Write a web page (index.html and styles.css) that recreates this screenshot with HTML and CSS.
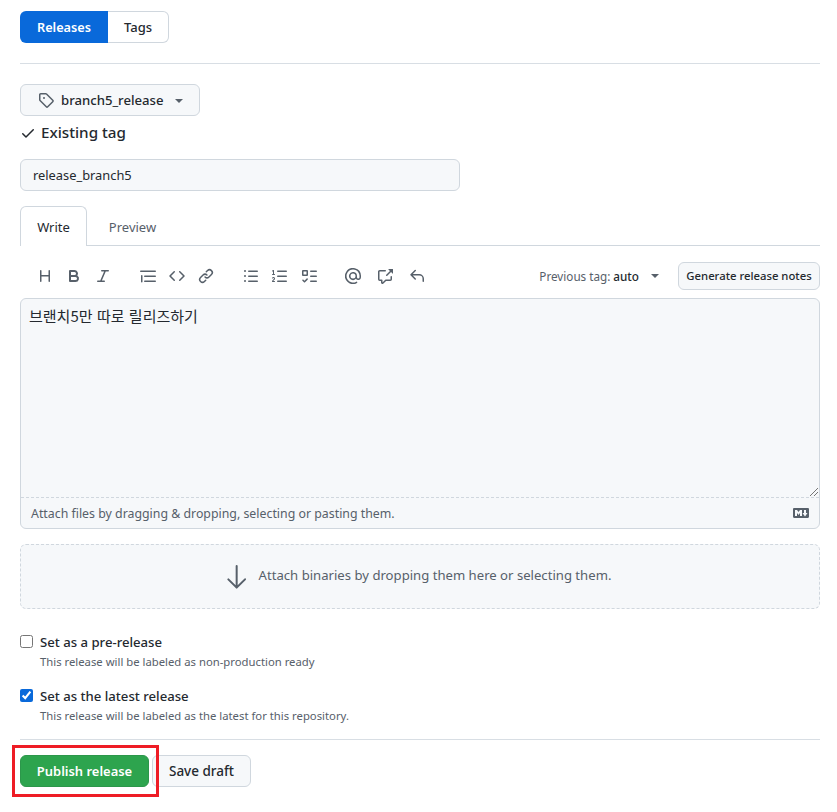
FILE: index.html
```html
<!DOCTYPE html>
<html lang="en">
<head>
<meta charset="utf-8">
<title>Release</title>
<link rel="stylesheet" href="styles.css">
</head>
<body>
<main class="page">
  <nav class="segmented">
    <a class="seg seg-active">Releases</a>
    <a class="seg seg-plain">Tags</a>
  </nav>
  <hr class="rule rule-top">
  <button class="btn btn-tag">
    <svg class="ico ico-muted" viewBox="0 0 16 16" width="16" height="16"><path d="M1 7.775V2.75C1 1.784 1.784 1 2.75 1h5.025c.464 0 .91.184 1.238.513l6.25 6.25a1.75 1.75 0 0 1 0 2.474l-5.026 5.026a1.75 1.75 0 0 1-2.474 0l-6.25-6.25A1.75 1.75 0 0 1 1 7.775Zm1.5 0c0 .066.026.13.073.177l6.25 6.25a.25.25 0 0 0 .354 0l5.025-5.025a.25.25 0 0 0 0-.354l-6.25-6.25a.25.25 0 0 0-.177-.073H2.75a.25.25 0 0 0-.25.25ZM6 5a1 1 0 1 1 0 2 1 1 0 0 1 0-2Z"/></svg>
    <span class="tag-name">branch5_release</span>
    <span class="caret"></span>
  </button>
  <div class="existing">
    <svg class="ico ico-dark" viewBox="0 0 16 16" width="16" height="16"><path d="M13.78 4.22a.75.75 0 0 1 0 1.06l-7.25 7.25a.75.75 0 0 1-1.06 0L2.22 9.28a.751.751 0 0 1 .018-1.042.751.751 0 0 1 1.042-.018L6 10.94l6.72-6.72a.75.75 0 0 1 1.06 0Z"/></svg>
    <span class="existing-text">Existing tag</span>
  </div>
  <div class="title-input">release_branch5</div>
  <div class="tabs">
    <span class="tab tab-active">Write</span>
    <span class="tab tab-plain">Preview</span>
  </div>
  <div class="toolbar">
    <div class="tool-group group-text">
      <svg class="ico ico-muted" viewBox="0 0 16 16" width="16" height="16"><path d="M3.75 2a.75.75 0 0 1 .75.75V7h7V2.75a.75.75 0 0 1 1.5 0v10.5a.75.75 0 0 1-1.5 0V8.5h-7v4.75a.75.75 0 0 1-1.5 0V2.75A.75.75 0 0 1 3.75 2Z"/></svg>
      <svg class="ico ico-muted" viewBox="0 0 16 16" width="16" height="16"><path d="M4 2h4.5a3.501 3.501 0 0 1 2.852 5.53A3.499 3.499 0 0 1 9.5 14H4a1 1 0 0 1-1-1V3a1 1 0 0 1 1-1Zm1 7v3h4.5a1.5 1.5 0 0 0 0-3Zm3.5-2a1.5 1.5 0 0 0 0-3H5v3Z"/></svg>
      <svg class="ico ico-muted" viewBox="0 0 16 16" width="16" height="16"><path d="M6 2.75A.75.75 0 0 1 6.75 2h6.5a.75.75 0 0 1 0 1.5h-2.505l-3.858 9H9.25a.75.75 0 0 1 0 1.5h-6.5a.75.75 0 0 1 0-1.5h2.505l3.858-9H6.75A.75.75 0 0 1 6 2.75Z"/></svg>
    </div>
    <div class="tool-group group-code">
      <svg class="ico ico-muted" viewBox="0 0 16 16" width="16" height="16"><path d="M.75 2.5h14.5a.75.75 0 0 1 0 1.5H.75a.75.75 0 0 1 0-1.5Zm4 5h10.5a.75.75 0 0 1 0 1.5H4.75a.75.75 0 0 1 0-1.5Zm0 5h10.5a.75.75 0 0 1 0 1.5H4.75a.75.75 0 0 1 0-1.5ZM2.5 7.75v6a.75.75 0 0 1-1.5 0v-6a.75.75 0 0 1 1.5 0Z"/></svg>
      <svg class="ico ico-muted" viewBox="0 0 16 16" width="16" height="16"><path d="m11.28 3.22 4.25 4.25a.75.75 0 0 1 0 1.06l-4.25 4.25a.749.749 0 0 1-1.275-.326.749.749 0 0 1 .215-.734L13.94 8l-3.72-3.72a.749.749 0 0 1 .326-1.275.749.749 0 0 1 .734.215Zm-6.56 0a.751.751 0 0 1 1.042.018.751.751 0 0 1 .018 1.042L2.06 8l3.72 3.72a.749.749 0 0 1-.326 1.275.749.749 0 0 1-.734-.215L.47 8.53a.75.75 0 0 1 0-1.06Z"/></svg>
      <svg class="ico ico-muted" viewBox="0 0 16 16" width="16" height="16"><path d="m7.775 3.275 1.25-1.25a3.5 3.5 0 1 1 4.95 4.95l-2.5 2.5a3.5 3.5 0 0 1-4.95 0 .751.751 0 0 1 .018-1.042.751.751 0 0 1 1.042-.018 1.998 1.998 0 0 0 2.83 0l2.5-2.5a2.002 2.002 0 0 0-2.83-2.83l-1.25 1.25a.751.751 0 0 1-1.042-.018.751.751 0 0 1-.018-1.042Zm-4.69 9.64a1.998 1.998 0 0 0 2.83 0l1.25-1.25a.751.751 0 0 1 1.042.018.751.751 0 0 1 .018 1.042l-1.25 1.25a3.5 3.5 0 1 1-4.95-4.95l2.5-2.5a3.5 3.5 0 0 1 4.95 0 .751.751 0 0 1-.018 1.042.751.751 0 0 1-1.042.018 1.998 1.998 0 0 0-2.83 0l-2.5 2.5a1.998 1.998 0 0 0 0 2.83Z"/></svg>
    </div>
    <div class="tool-group group-list">
      <svg class="ico ico-muted" viewBox="0 0 16 16" width="16" height="16"><path d="M5.75 2.5h8.5a.75.75 0 0 1 0 1.5h-8.5a.75.75 0 0 1 0-1.5Zm0 5h8.5a.75.75 0 0 1 0 1.5h-8.5a.75.75 0 0 1 0-1.5Zm0 5h8.5a.75.75 0 0 1 0 1.5h-8.5a.75.75 0 0 1 0-1.5ZM2 14a1 1 0 1 1 0-2 1 1 0 0 1 0 2Zm1-6a1 1 0 1 1-2 0 1 1 0 0 1 2 0ZM2 4a1 1 0 1 1 0-2 1 1 0 0 1 0 2Z"/></svg>
      <svg class="ico ico-muted" viewBox="0 0 16 16" width="16" height="16"><path d="M5 3.25a.75.75 0 0 1 .75-.75h8.5a.75.75 0 0 1 0 1.5h-8.5A.75.75 0 0 1 5 3.25Zm0 5a.75.75 0 0 1 .75-.75h8.5a.75.75 0 0 1 0 1.5h-8.5A.75.75 0 0 1 5 8.25Zm0 5a.75.75 0 0 1 .75-.75h8.5a.75.75 0 0 1 0 1.5h-8.5a.75.75 0 0 1-.75-.75ZM.924 10.32a.5.5 0 0 1-.851-.525l.001-.001.001-.002.002-.004.007-.011c.097-.144.215-.273.348-.384.228-.19.588-.392 1.068-.392.468 0 .858.181 1.126.484.259.294.377.673.377 1.038 0 .987-.686 1.495-1.156 1.845l-.047.035c-.303.225-.522.4-.654.597h1.357a.5.5 0 0 1 0 1H.5a.5.5 0 0 1-.5-.5c0-1.005.692-1.52 1.167-1.875l.035-.025c.531-.396.8-.625.8-1.078a.57.57 0 0 0-.128-.376C1.806 10.068 1.695 10 1.5 10a.658.658 0 0 0-.429.163.835.835 0 0 0-.144.153ZM2.003 2.5V6h.503a.5.5 0 0 1 0 1H.5a.5.5 0 0 1 0-1h.503V3.308l-.28.14a.5.5 0 0 1-.446-.895l1.003-.5a.5.5 0 0 1 .723.447Z"/></svg>
      <svg class="ico ico-muted" viewBox="0 0 16 16" width="16" height="16"><path d="M2 2h4a1 1 0 0 1 1 1v4a1 1 0 0 1-1 1H2a1 1 0 0 1-1-1V3a1 1 0 0 1 1-1Zm4.655 8.595a.75.75 0 0 1 0 1.06L4.03 14.28a.75.75 0 0 1-1.06 0l-1.5-1.5a.749.749 0 0 1 .326-1.275.749.749 0 0 1 .734.215l.97.97 2.095-2.095a.75.75 0 0 1 1.06 0ZM9.75 2.5h5.5a.75.75 0 0 1 0 1.5h-5.5a.75.75 0 0 1 0-1.5Zm0 5h5.5a.75.75 0 0 1 0 1.5h-5.5a.75.75 0 0 1 0-1.5Zm0 5h5.5a.75.75 0 0 1 0 1.5h-5.5a.75.75 0 0 1 0-1.5Zm-7.25-9v3h3v-3Z"/></svg>
    </div>
    <div class="tool-group group-misc">
      <svg class="ico ico-muted" viewBox="0 0 16 16" width="16" height="16"><path d="M4.75 2.37a6.501 6.501 0 0 0 6.5 11.26.75.75 0 0 1 .75 1.298A7.999 7.999 0 0 1 .989 4.148 8 8 0 0 1 16 7.75v1.5a2.75 2.75 0 0 1-5.072 1.475 3.999 3.999 0 0 1-6.65-4.19A4 4 0 0 1 12 8v1.25a1.25 1.25 0 0 0 2.5 0V7.867a6.5 6.5 0 0 0-9.75-5.496ZM10.5 8a2.5 2.5 0 1 0-5 0 2.5 2.5 0 0 0 5 0Z"/></svg>
      <svg class="ico ico-muted" viewBox="0 0 16 16" width="16" height="16"><path d="M2.75 3.5a.25.25 0 0 0-.25.25v7.5c0 .138.112.25.25.25h2a.75.75 0 0 1 .75.75v2.19l2.72-2.72a.749.749 0 0 1 .53-.22h4.5a.25.25 0 0 0 .25-.25v-2.5a.75.75 0 0 1 1.5 0v2.5A1.75 1.75 0 0 1 13.25 13H9.06l-2.573 2.573A1.458 1.458 0 0 1 4 14.543V13H2.75A1.75 1.75 0 0 1 1 11.25v-7.5C1 2.784 1.784 2 2.75 2h5.5a.75.75 0 0 1 0 1.5ZM16 1.25v4.146a.25.25 0 0 1-.427.177L14.03 4.03l-3.75 3.75a.749.749 0 0 1-1.275-.326.749.749 0 0 1 .215-.734l3.75-3.75-1.543-1.543A.25.25 0 0 1 11.604 1h4.146a.25.25 0 0 1 .25.25Z"/></svg>
      <svg class="ico ico-muted" viewBox="0 0 16 16" width="16" height="16"><path d="M6.78 1.97a.75.75 0 0 1 0 1.06L3.81 6h6.44A4.75 4.75 0 0 1 15 10.75v2.5a.75.75 0 0 1-1.5 0v-2.5a3.25 3.25 0 0 0-3.25-3.25H3.81l2.97 2.97a.749.749 0 0 1-.326 1.275.749.749 0 0 1-.734-.215L1.47 7.28a.75.75 0 0 1 0-1.06l4.25-4.25a.75.75 0 0 1 1.06 0Z"/></svg>
    </div>
    <div class="prev-tag">
      <span class="prev-label">Previous tag:</span>
      <span class="prev-value">auto</span>
      <span class="caret caret-prev"></span>
    </div>
    <button class="btn btn-notes">Generate release notes</button>
  </div>
  <div class="editor">
    <div class="editor-body">브랜치5만 따로 릴리즈하기
      <svg class="resize" viewBox="0 0 10 10" width="10" height="10"><path d="M9 1 1 9M9 5 5 9"/></svg>
    </div>
    <div class="editor-foot">
      <span>Attach files by dragging &amp; dropping, selecting or pasting them.</span>
      <svg class="ico ico-muted" viewBox="0 0 16 16" width="16" height="16"><path d="M14.85 3c.63 0 1.15.52 1.14 1.15v7.7c0 .63-.51 1.15-1.15 1.15H1.15C.52 13 0 12.48 0 11.84V4.15C0 3.52.52 3 1.15 3ZM9 11V5H7L5.5 7 4 5H2v6h2V8l1.5 1.92L7 8v3Zm2.99.5L14.5 8H13V5h-2v3H9.5Z"/></svg>
    </div>
  </div>
  <div class="dropzone">
    <svg class="ico ico-muted arrow" viewBox="0 0 24 24" width="32" height="32"><path d="M4.97 13.22a.75.75 0 0 1 1.06 0L11 18.19V3.75a.75.75 0 0 1 1.5 0v14.44l4.97-4.97a.749.749 0 0 1 1.275.326.749.749 0 0 1-.215.734l-6.25 6.25a.75.75 0 0 1-1.06 0l-6.25-6.25a.75.75 0 0 1 0-1.06Z"/></svg>
    <span class="drop-text">Attach binaries by dropping them here or selecting them.</span>
  </div>
  <label class="option option-first">
    <input class="check" type="checkbox">
    <span class="option-text">
      <span class="option-title">Set as a pre-release</span>
      <span class="option-note">This release will be labeled as non-production ready</span>
    </span>
  </label>
  <label class="option option-second">
    <input class="check" type="checkbox" checked>
    <span class="option-text">
      <span class="option-title">Set as the latest release</span>
      <span class="option-note">This release will be labeled as the latest for this repository.</span>
    </span>
  </label>
  <hr class="rule rule-bottom">
  <div class="actions">
    <span class="highlight"></span>
    <button class="btn btn-publish">Publish release</button>
    <button class="btn btn-draft">Save draft</button>
  </div>
</main>
</body>
</html>
```
FILE: styles.css
```css
* { box-sizing: border-box; }
html, body { margin: 0; padding: 0; background: #fff; }
body {
  font-family: "Noto Sans", "Noto Sans CJK KR", sans-serif;
  font-size: 14px;
  color: #24292f;
  overflow: hidden;
}
.page { width: 837px; height: 812px; padding: 11px 17px 0 20px; }
.ico { display: block; flex: none; fill: currentColor; }
.ico-muted { color: #57606a; }
.ico-dark { color: #24292f; }

.segmented {
  display: inline-flex;
  height: 32px;
  vertical-align: top;
}
.seg {
  display: flex;
  align-items: center;
  justify-content: center;
  font-size: 12.7px;
}
.seg-active {
  width: 88px;
  background: #0969da;
  color: #fff;
  font-weight: 600;
  border-radius: 6px 0 0 6px;
}
.seg-plain {
  width: 61px;
  font-weight: 500;
  font-size: 13px;
  border: 1px solid #d0d7de;
  border-left: 0;
  border-radius: 0 6px 6px 0;
}
.rule { border: 0; border-top: 1px solid #d8dee4; margin: 0; }
.rule-top { margin-top: 20px; }

.btn {
  font-family: inherit;
  color: #24292f;
  background: #f6f8fa;
  border: 1px solid #d0d7de;
  border-radius: 6px;
  font-weight: 600;
  padding: 0;
  display: flex;
  align-items: center;
  justify-content: center;
}
.btn-tag {
  width: 180px;
  height: 32px;
  margin-top: 20px;
  font-size: 13.15px;
  font-weight: 500;
  justify-content: flex-start;
  padding-left: 17px;
}
.tag-name { margin-left: 7px; }
.caret {
  width: 0;
  height: 0;
  border-left: 4px solid transparent;
  border-right: 4px solid transparent;
  border-top: 4px solid #57606a;
  margin-left: 12px;
  margin-top: 2px;
}
.existing {
  display: flex;
  align-items: center;
  gap: 5px;
  height: 33px;
  font-size: 15.2px;
  font-weight: 500;
}
.existing-text { margin-bottom: 2px; }
.title-input {
  width: 440px;
  height: 32px;
  margin-top: 10px;
  background: #f6f8fa;
  border: 1px solid #d0d7de;
  border-radius: 6px;
  padding-left: 12px;
  display: flex;
  align-items: center;
  font-size: 12.85px;
}
.tabs {
  display: flex;
  height: 40px;
  margin-top: 15px;
  border-bottom: 1px solid #d0d7de;
}
.tab {
  display: flex;
  align-items: center;
  justify-content: center;
  font-size: 13px;
}
.tab-active {
  width: 67px;
  height: 40px;
  border: 1px solid #d0d7de;
  border-bottom: 0;
  border-radius: 6px 6px 0 0;
  background: #fff;
}
.tab-plain { width: 91px; color: #57606a; padding-top: 2px; }

.toolbar {
  display: flex;
  align-items: center;
  height: 28px;
  margin-top: 16px;
}
.tool-group { display: flex; align-items: center; gap: 13px; }
.group-text { margin-left: 17px; }
.group-code { margin-left: 29px; }
.group-list { margin-left: 29px; }
.group-misc { margin-left: 28px; gap: 16px; }
.prev-tag {
  display: flex;
  align-items: center;
  margin-left: auto;
  font-size: 11.7px;
  font-weight: 400;
  margin-right: 19px;
  padding-bottom: 1px;
}
.prev-label { color: #57606a; }
.prev-value { margin-left: 3px; color: #24292f; font-weight: 500; }
.caret-prev { margin-left: 12px; margin-top: 1px; }
.btn-notes {
  width: 142px;
  height: 28px;
  font-size: 11.3px;
  font-weight: 500;
  padding-bottom: 1px;
}

.editor {
  height: 231px;
  margin-top: 8px;
  background: #f6f8fa;
  border: 1px solid #d0d7de;
  border-radius: 6px;
  display: flex;
  flex-direction: column;
}
.editor-body {
  position: relative;
  flex: 1;
  padding: 7px 8px;
  font-size: 15px;
  word-spacing: 1px;
  line-height: 20px;
  border-bottom: 1px dashed #d0d7de;
  font-family: "Noto Sans CJK KR", "Noto Sans", sans-serif;
}
.resize {
  position: absolute;
  right: 0;
  bottom: 0;
  fill: none;
  stroke: #767676;
  stroke-width: 1;
}
.editor-foot {
  height: 30px;
  display: flex;
  align-items: center;
  justify-content: space-between;
  padding: 0 10px;
  font-size: 12.35px;
  color: #57606a;
}
.dropzone {
  height: 65px;
  margin-top: 15px;
  padding-right: 8px;
  background: #f6f8fa;
  border: 1px dashed #d0d7de;
  border-radius: 6px;
  display: flex;
  align-items: center;
  justify-content: center;
  gap: 6px;
  color: #57606a;
  font-size: 13.13px;
}
.arrow { margin-top: 1px; }
.drop-text { margin-bottom: 3px; }
.option { display: flex; align-items: flex-start; gap: 7px; }
.option-first { margin-top: 24px; }
.option-second { margin-top: 17px; }
.check {
  width: 13px;
  height: 13px;
  margin: 2px 0 0;
  accent-color: #0969da;
  flex: none;
}
.option-text { display: flex; flex-direction: column; }
.option-title { font-size: 13.15px; font-weight: 500; line-height: 18px; }
.option-note { font-size: 11.3px; color: #57606a; line-height: 16px; margin-top: 3px; }
.rule-bottom { margin-top: 15px; }
.actions {
  position: relative;
  display: flex;
  gap: 3px;
  margin-top: 15px;
}
.btn-publish {
  width: 129px;
  height: 32px;
  background: #2da44e;
  border-color: #2c974b;
  color: #fff;
  font-size: 12.95px;
}
.btn-draft {
  width: 99px;
  height: 32px;
  font-size: 13.5px;
  font-weight: 500;
}
.highlight {
  position: absolute;
  left: -8px;
  top: -10px;
  width: 147px;
  height: 52px;
  border: 3px solid #ee1c25;
  pointer-events: none;
}
```
